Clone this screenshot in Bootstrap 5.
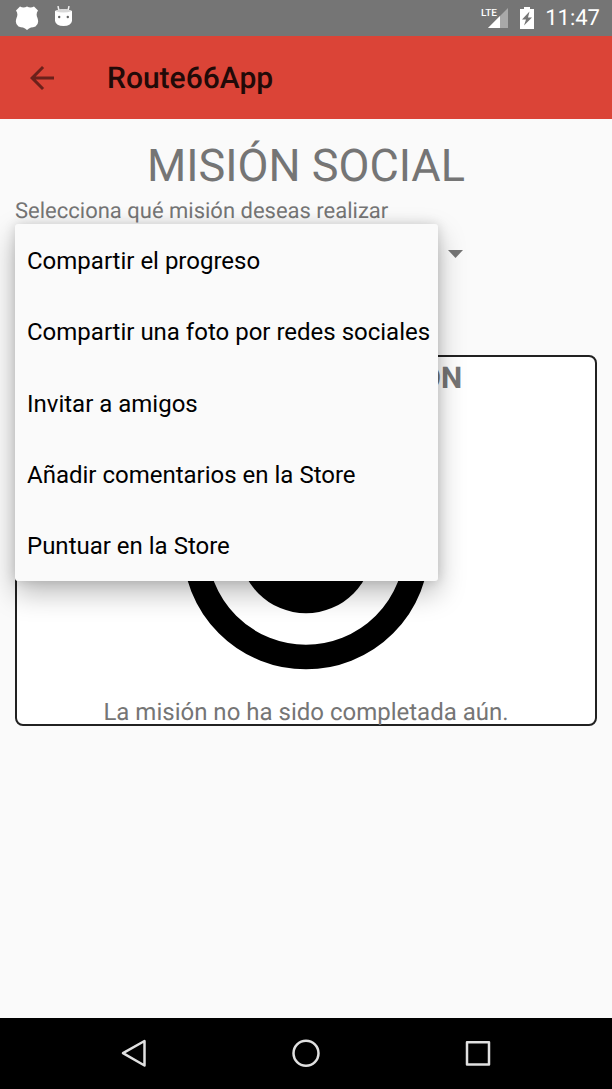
<!DOCTYPE html>
<html lang="es">
<head>
<meta charset="utf-8">
<meta name="viewport" content="width=device-width, initial-scale=1">
<title>Route66App</title>
<link href="https://cdn.jsdelivr.net/npm/bootstrap@5.3.0/dist/css/bootstrap.min.css" rel="stylesheet">
<style>
  body { font-family: Roboto, "Liberation Sans", sans-serif; background: #fafafa; color: #757575; font-size: 24px; line-height: 28px; text-rendering: geometricPrecision; }
  .status-bar { background: #757575; height: 36px; font-size: 22px; padding: 0 12px 0 15px; }
  .status-clock { padding-top: 2px; }
  .app-bar { background: #db4437; height: 83px; padding: 0 24px; }
  .app-title { font-size: 30px; line-height: 36px; font-weight: 500; color: #210a08; margin-left: 47px; padding-top: 3px; }
  .back-btn { width: 36px; height: 36px; }
  .screen-body { padding: 17px 15px 0; }
  .screen-title { font-size: 45px; line-height: 60px; font-weight: 400; }
  .picker-label { font-size: 22px; line-height: 24px; padding-top: 4px; }
  .picker { width: 456px; }
  .picker-toggle { height: 60px; padding: 0 8px; }
  .picker-menu { top: 0; left: 0; z-index: 5; min-height: 357px; background: #fafafa; border-radius: 3px; box-shadow: 0 12px 28px rgba(0,0,0,.27), 0 0 12px rgba(0,0,0,.14); }
  .picker-option { padding: 2px 8px 0 12px; color: #000; font-size: 24px; line-height: 28px; white-space: nowrap; text-align: left; }
  .mission-card { margin-top: 71px; background: #fff; border: 2px solid #212121; border-radius: 8px; }
  .mission-title { font-size: 30px; line-height: 36px; font-weight: 700; padding: 4px 0 1px; }
  .mission-icon { width: 296px; height: 296px; }
  .mission-state { line-height: 24px; padding-top: 6px; }
  .nav-bar { background: #000; height: 71px; gap: 124px; }
  .nav-key { width: 48px; height: 48px; }
</style>
</head>
<body class="d-flex flex-column min-vh-100">
<header>
  <div class="status-bar d-flex align-items-center text-white">
    <svg width="24" height="25" viewBox="0 0 24 25" fill="#fff" aria-hidden="true"><path d="M5 .5Q8.500 2.500 12 .5Q15.500 2.500 19 .5L23 4.500Q20.500 8 22.500 12Q24.500 18 20.500 20.500Q18 21.500 16 21.500Q14 22 12 24Q10 22 8 21.500Q6 21.500 3.500 20.500Q-.5 18 1.500 12Q3.500 8 1 4.500Z"/></svg>
    <svg class="ms-3" width="17" height="24" viewBox="0 1 17 24" aria-hidden="true"><path d="M3 1L4 6M14 1L13 6" stroke="#eee" stroke-width="1.500"/><path d="M0 6Q8.500 2 17 6V16Q16 21 8.500 21Q1 21 0 16Z" fill="#fff"/><path d="M0 6Q8.500 2 17 6Q8.500 9 0 6Z" fill="#d8d8d8"/><circle cx="4.200" cy="12" r="1.200" fill="#666"/><circle cx="12.800" cy="12" r="1.200" fill="#666"/></svg>
    <svg class="ms-auto" width="28" height="24" viewBox="0 0 28 24" aria-hidden="true"><path d="M27 2V22H7Z" fill="#a9a9a9"/><path d="M19 10V22H7Z" fill="#fff"/><text x="0" y="10" font-size="10" font-weight="500" fill="#fff">LTE</text></svg>
    <svg class="mx-2" width="20" height="22" viewBox="0 0 20 22" aria-hidden="true"><path d="M7 0h6v2h4v20H3V2h4z" fill="#fff"/><path d="M12.500 4.500L5 12.500H9L7 18.500L15 10.500H11Z" fill="#757575"/></svg>
    <span class="status-clock">11:47</span>
  </div>
  <nav class="app-bar d-flex align-items-center">
    <button type="button" class="btn back-btn p-0 border-0 d-flex" aria-label="Atrás"><svg width="36" height="36" viewBox="0 0 24 24" fill="#6b211b"><path d="M20 11H7.830l5.590-5.590L12 4l-8 8 8 8 1.410-1.410L7.830 13H20v-2z"/></svg></button>
    <h1 class="app-title mb-0">Route66App</h1>
  </nav>
</header>
<main class="screen-body flex-grow-1">
  <h2 class="screen-title text-center mb-0">MISIÓN SOCIAL</h2>
  <p class="picker-label mb-0" id="pickerLabel">Selecciona qué misión deseas realizar</p>
  <div class="picker position-relative">
    <button type="button" class="btn picker-toggle w-100 border-0 d-flex align-items-center justify-content-end" aria-labelledby="pickerLabel" aria-haspopup="listbox" aria-expanded="true"><svg width="15" height="8" viewBox="0 0 15 8" fill="#757575"><path d="M0 0H15L7.500 8Z"/></svg></button>
    <div class="picker-menu position-absolute d-flex flex-column" role="listbox" aria-labelledby="pickerLabel">
      <button type="button" role="option" class="btn picker-option border-0 flex-fill">Compartir el progreso</button>
      <button type="button" role="option" class="btn picker-option border-0 flex-fill">Compartir una foto por redes sociales</button>
      <button type="button" role="option" class="btn picker-option border-0 flex-fill">Invitar a amigos</button>
      <button type="button" role="option" class="btn picker-option border-0 flex-fill">Añadir comentarios en la Store</button>
      <button type="button" role="option" class="btn picker-option border-0 flex-fill">Puntuar en la Store</button>
    </div>
  </div>
  <section class="mission-card text-center">
    <h3 class="mission-title mb-0">ESTADO DE LA MISIÓN</h3>
    <svg class="mission-icon d-block mx-auto" viewBox="0 0 24 24" aria-hidden="true"><circle cx="12" cy="12" r="9" fill="none" stroke="#000" stroke-width="2"/><circle cx="12" cy="12" r="5.450"/></svg>
    <p class="mission-state mb-0">La misión no ha sido completada aún.</p>
  </section>
</main>
<footer class="nav-bar d-flex align-items-center justify-content-center">
  <button type="button" class="btn nav-key p-0 border-0 d-flex" aria-label="Volver"><svg width="48" height="48" viewBox="0 0 48 48" fill="none" stroke="#e0e0e0" stroke-width="2.500" stroke-linejoin="round"><path d="M34.500 11V35.500L13 23.200Z"/></svg></button>
  <button type="button" class="btn nav-key p-0 border-0 d-flex" aria-label="Inicio"><svg width="48" height="48" viewBox="0 0 48 48" fill="none" stroke="#e0e0e0" stroke-width="2.500"><circle cx="24" cy="23.200" r="12.500"/></svg></button>
  <button type="button" class="btn nav-key p-0 border-0 d-flex" aria-label="Recientes"><svg width="48" height="48" viewBox="0 0 48 48" fill="none" stroke="#e0e0e0" stroke-width="2.500" stroke-linejoin="round"><path d="M13 12.200H35V34.500H13Z"/></svg></button>
</footer>
<script src="https://cdn.jsdelivr.net/npm/bootstrap@5.3.0/dist/js/bootstrap.bundle.min.js"></script>
</body>
</html>
